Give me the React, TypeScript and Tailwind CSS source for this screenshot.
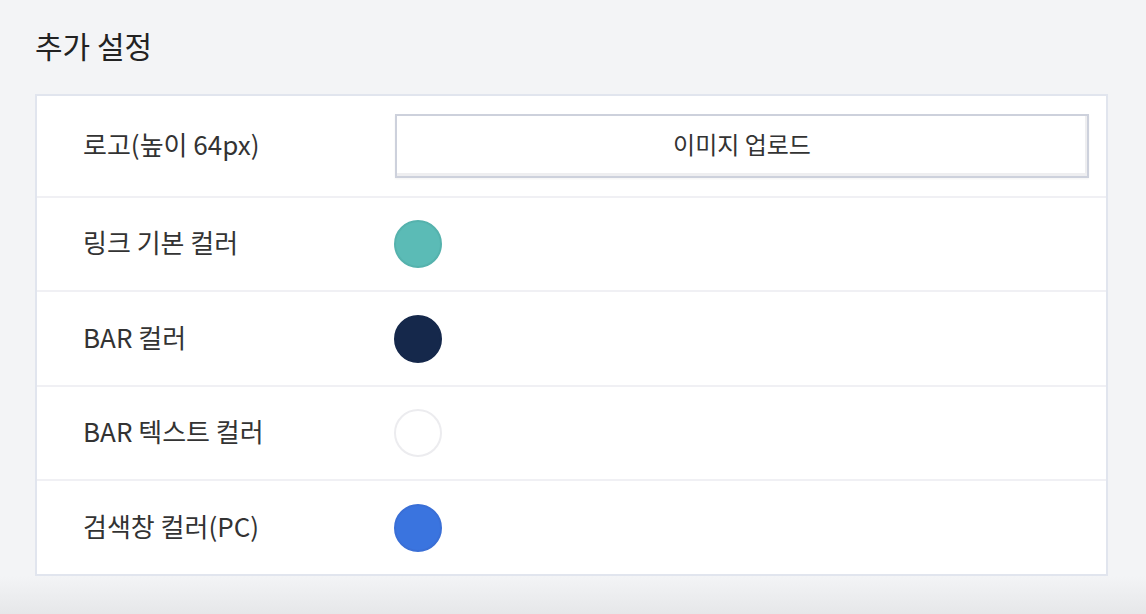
const rows = [
  { label: '링크 기본 컬러', color: 'bg-[#5bbbb6] border-[#55b2ad]', h: 'h-[94px]' },
  { label: 'BAR 컬러', color: 'bg-[#15284b] border-[#15284b]', h: 'h-[95px]' },
  { label: 'BAR 텍스트 컬러', color: 'bg-white border-[#ececef]', h: 'h-[94px]' },
  { label: '검색창 컬러(PC)', color: 'bg-[#3a74df] border-[#3a6fd6]', h: 'h-[93px]' },
]

export default function App() {
  return (
    <div
      className="min-h-[614px] bg-[#f3f4f6] flex flex-col text-[#333]"
      style={{ fontFamily: '"Noto Sans CJK KR", "Noto Sans", sans-serif' }}
    >
      <div className="pl-[35px] pr-[38px] pt-[24px]">
        <h2 className="text-[30px] leading-[42px] text-[#222] mb-[28px]">추가 설정</h2>

        <div className="bg-white border-2 border-[#e1e5ee] flex flex-col">
          {/* logo row */}
          <div className="flex items-center h-[102px] border-b-2 border-[#f0f0f4]">
            <div className="w-[357px] pl-[46px] pb-[6px] text-[26px]">로고(높이 64px)</div>
            <div className="flex-1 pr-[17px] pl-px">
              <button className="w-full h-[64px] pb-[4px] border-2 border-[#cdd1dc] bg-white shadow-[inset_-2px_-3px_0_#eeeef0,0_1px_2px_rgba(0,0,0,0.05)] text-[24px] text-[#333]">
                이미지 업로드
              </button>
            </div>
          </div>

          {rows.map((row, i) => (
            <div
              key={row.label}
              className={`flex items-center ${row.h} ${i < rows.length - 1 ? 'border-b-2 border-[#f0f0f4]' : ''}`}
            >
              <div className="w-[357px] pl-[46px] pb-[5px] text-[26px]">{row.label}</div>
              <div className={`w-[48px] h-[48px] rounded-full border-2 ${row.color}`} />
            </div>
          ))}
        </div>
      </div>
      <div className="flex-1 bg-gradient-to-b from-[#f3f4f6] to-[#e6e7e9]" />
    </div>
  )
}
